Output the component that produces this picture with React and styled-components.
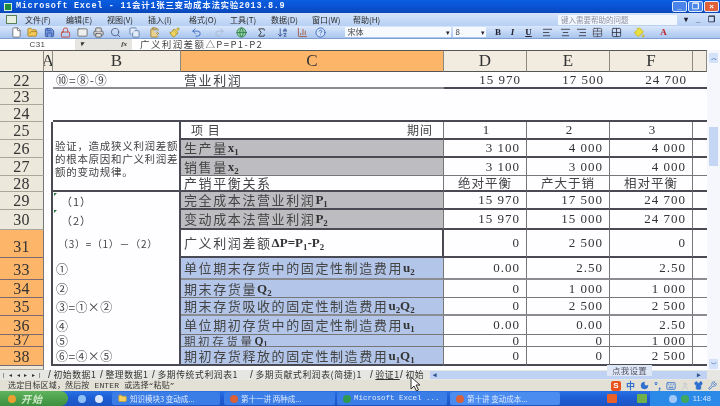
import React from "react";
import styled, { createGlobalStyle } from "styled-components";
import { File, FolderOpen, Save, Printer, Search, Copy, ClipboardPaste, Paintbrush, Undo2, Redo2, Globe, Sigma, ArrowDownAZ, ChartColumn, CircleHelp, Lock, Mail, AlignLeft, AlignCenter, AlignRight, TableCellsMerge, Grid2x2, PaintBucket, Moon, Keyboard, Shirt, Wrench, Folder, User } from "lucide-react";

const CJK = `"Noto Sans CJK SC", "Liberation Sans", sans-serif`;
const SERIF = `"Liberation Serif", "Noto Sans CJK SC", serif`;
const MONO = `"Liberation Mono", "Noto Sans CJK SC", monospace`;

const Global = createGlobalStyle`
  html, body { margin: 0; padding: 0; background: #fff; }
  #root { width: 720px; height: 406px; overflow: hidden; }
  sub { font-size: 0.68em; line-height: 0; vertical-align: -0.3em; }
`;

const Screen = styled.div`
  position: relative; width: 720px; height: 406px; overflow: hidden;
  display: flex; flex-direction: column; filter: blur(0.55px); background: #fff;
`;
const TitleBar = styled.div`
  height: 13px; flex: none; display: flex; align-items: center; padding-left: 4px; gap: 4px;
  background: linear-gradient(#0a5fe0, #0850d0 60%, #0a48b8);
  color: #f2f6ff; font: bold 8.5px/13px ${MONO}; letter-spacing: 0.7px; white-space: nowrap;
`;
const AppGlyph = styled.span`
  width: 8px; height: 8px; background: #1f8a3c; border: 1px solid #d8f0d8; box-sizing: border-box; flex: none;
`;
const WinButtons = styled.div`margin-left: auto; display: flex; gap: 1px; padding-right: 1px; align-items: center; letter-spacing: 0;`;
const WinButton = styled.span`
  width: 15px; height: 11px; border-radius: 2px; border: 1px solid #dfe9ff; box-sizing: border-box;
  background: ${p => (p.$red ? "#e0603a" : "#4a84e8")}; color: #fff; font: bold 8px/9px "Liberation Sans", sans-serif; text-align: center;
`;
const MenuBar = styled.div`
  height: 13px; flex: none; display: flex; align-items: center; padding-left: 6px;
  background: linear-gradient(#d3e3fa, #b7d0f4); font: 8px/13px ${CJK}; color: #2a2a2a; white-space: nowrap;
`;
const MenuHandle = styled.span`
  width: 11px; height: 9px; margin-right: 8px; background: #e4efe0; border: 1px solid #58805a; box-sizing: border-box; flex: none;
`;
const MenuItem = styled.span`width: 41px; flex: none;`;
const HelpBox = styled.span`
  margin-left: 164px; width: 116px; height: 10px; background: #f2f6fd; color: #8b93a3; padding-left: 3px;
  font-size: 7.5px; line-height: 10px; flex: none;
`;
const MenuControls = styled.span`
  display: flex; gap: 8px; margin-left: 7px; font: bold 8px/13px "Liberation Sans", sans-serif; color: #223;
`;
const ToolBar = styled.div`
  height: 13px; flex: none; display: flex; align-items: center; padding-left: 8px;
  background: linear-gradient(#d9e7fb, #a9c5ee); border-bottom: 1px solid #7f9fd0; box-sizing: border-box;
`;
const Tool = styled.span`
  width: ${p => p.$w || 16.5}px; margin-left: ${p => p.$ml || 0}px; flex: none; display: flex; justify-content: center; align-items: center;
  color: ${p => p.$c || "#46679c"}; font: bold 9px/12px ${SERIF};
`;
const Combo = styled.span`
  width: ${p => p.$w}px; height: 10px; flex: none; margin-left: ${p => p.$ml || 0}px; background: #f6f9fe;
  font: 8px/10px ${CJK}; color: #444; padding-left: 3px; box-sizing: border-box; position: relative;
  &::after { content: "▾"; position: absolute; right: 1px; top: 0; font-size: 7px; color: #223; }
`;
const FormulaBar = styled.div`
  height: 11px; flex: none; display: flex; background: #fff; font: 9.5px/11px ${CJK}; color: #444;
`;
const NameBox = styled.span`width: 75px; text-align: center; font: 8px/11px "Liberation Sans", sans-serif; letter-spacing: .4px;`;
const NameArrow = styled.span`width: 57px; background: #e6e5e0; display: flex; box-sizing: border-box; padding: 0 5px 0 5px; justify-content: space-between; font: italic bold 7px/11px ${SERIF}; color: #333;`;
const Formula = styled.span`padding-left: 8px; letter-spacing: 1.4px; white-space: nowrap;`;

const SheetArea = styled.div`height: 320px; flex: none; display: flex; overflow: hidden; position: relative;`;
const Grid = styled.div`
  display: grid; width: 707px; flex: none; align-content: start;
  grid-template-columns: 44px 9px 128px 263px 83px 83px 83px 14px;
  grid-template-rows: 22px 17px 16px 17px 18px 18px 18px 16px 18px 20px 28px 22px 18px 18px 19px 12px 19px 4px;
`;
const ColHead = styled.div`
  background: ${p => (p.$on ? "#fdb56a" : "#f1ebe0")}; border-right: 1px solid #8a8a80; border-bottom: 1px solid #555; border-top: 1px solid #555;
  display: flex; align-items: center; justify-content: center; font: 17px/20px ${SERIF}; color: #333; box-sizing: border-box; overflow: hidden;
`;
const RowHead = styled.div`
  background: ${p => (p.$on ? "#fdb56a" : "#ece8dc")}; border-bottom: 1px solid ${p => (p.$on ? "#7a6a70" : "#aaa79a")};
  border-right: 1px solid #777; box-sizing: border-box; text-align: center; overflow: hidden;
  font: 16px/${p => p.$lh}px ${SERIF}; color: #333; letter-spacing: .3px;
`;
const Cell = styled.div`
  box-sizing: border-box; min-width: 0; overflow: hidden; white-space: nowrap; display: flex; align-items: center;
  background: ${p => p.$bg || "#fefdff"}; color: ${p => (p.$num ? "#333" : "#444")};
  justify-content: ${p => p.$j || "flex-start"};
  padding: 0 ${p => (p.$j === "flex-end" ? 6 : p.$pr ?? 1)}px 0 ${p => p.$pl ?? 3}px;
  font: ${p => p.$fs || 13}px/${p => (p.$tight ? 10 : 14)}px ${p => (p.$num ? SERIF : CJK)};
  letter-spacing: ${p => p.$ls ?? 1.6}px;
  border-bottom: ${p => p.$bb || "none"};
  border-right: ${p => p.$br || "none"};
  grid-row: ${p => p.$span ? `span ${p.$span}` : "auto"};
  grid-column: ${p => p.$col || "auto"};
`;
const NoteCell = styled(Cell)`
  white-space: normal; font-size: 10.5px; line-height: 13px; letter-spacing: .7px; padding: 17px 0 0 2px; align-items: flex-start;
`;
const Marker = styled.span`
  position: absolute; left: 54px; width: 0; height: 0; border-top: 3px solid #1f7a3a; border-right: 3px solid transparent;
`;
const Bold = styled.b`font-family: ${SERIF}; letter-spacing: 0; color: #333;`;
const VBar = styled.div`
  width: 13px; background: #f5f7fc; display: flex; flex-direction: column; align-items: center; padding-top: 3px; box-sizing: border-box;
`;
const Thumb = styled.div`width: 9px; height: 39px; margin-top: 64px; background: #c5d6f4; flex: none;`;
const ScrollBtn = styled.div`
  width: 9px; height: 10px; background: #d4e2f9; color: #4a6fb8; font: bold 6px/10px "Liberation Sans", sans-serif; text-align: center;
  margin-top: ${p => p.$auto ? "auto" : "0"}; margin-bottom: ${p => p.$auto ? "1px" : "0"}; border-radius: 1px; flex: none;
`;
const TabsBar = styled.div`
  height: 10px; flex: none; display: flex; align-items: center; background: #e6e6e2; font: 8.8px/10px ${CJK}; color: #333; white-space: nowrap;
`;
const TabNav = styled.span`width: 48px; flex: none; font: 6px/10px "Liberation Sans", sans-serif; padding-left: 3px; letter-spacing: 4.5px; box-sizing: border-box; color: #333; overflow: hidden;`;
const Tab = styled.span`
  flex: none; letter-spacing: .6px; box-sizing: border-box; width: ${p => p.$w}px; overflow: hidden;
  & > u { text-decoration: ${p => (p.$on ? "underline" : "none")}; }
  &::before { content: "/"; font-size: 10px; margin-right: 2px; font-family: "Liberation Sans", sans-serif; }
`;
const HBar = styled.div`
  width: 277px; margin-left: 2px; height: 8px; background: #bfd2f3; display: flex; justify-content: space-between;
  align-items: center; color: #32518f; font: bold 7px/8px "Liberation Sans", sans-serif; padding: 0 6px 0 3px; box-sizing: border-box; flex: none;
`;
const StatusBar = styled.div`
  height: 11px; flex: none; display: flex; align-items: center; background: #e3e1d6; padding-left: 8px; font: 8px/11px ${MONO}; letter-spacing: .15px; color: #333; white-space: nowrap;
`;
const Ime = styled.div`
  margin-left: auto; display: flex; align-items: center; gap: 5px; height: 11px; padding-right: 3px; color: #2e6fd0; font: bold 9px/11px ${CJK};
`;
const ImeLogo = styled.span`
  width: 10px; height: 10px; border-radius: 2px; background: #e8521c; color: #fff; font: bold 8px/10px "Liberation Sans", sans-serif; text-align: center;
`;
const Taskbar = styled.div`
  height: 15px; flex: none; display: flex; align-items: center; background: linear-gradient(#2a72e6, #1f5fd6 40%, #1c54c2);
  font: 7.5px/13px ${CJK}; color: #dce8ff; white-space: nowrap;
`;
const Start = styled.div`
  width: 68px; height: 100%; flex: none; background: linear-gradient(#5fb45e, #3c8f3e); border-radius: 0 8px 8px 0; box-sizing: border-box;
  display: flex; align-items: center; gap: 5px; padding-left: 8px; font: italic bold 10px/15px ${CJK}; color: #cfe8c8; letter-spacing: 1px;
`;
const Quick = styled.span`width: 44px; flex: none; display: flex; gap: 9px; padding-left: 10px; box-sizing: border-box;`;
const Task = styled.span`
  width: ${p => p.$w}px; margin-right: ${p => p.$mr ?? 3}px; height: 13px; flex: none; border-radius: 2px; display: flex; align-items: center; gap: 3px; padding-left: 6px; box-sizing: border-box; overflow: hidden;
  background: ${p => (p.$on ? "#4a8cf0" : "#3a7de6")}; font-family: ${p => (p.$mono ? MONO : CJK)};
`;
const TrayDot = styled.span`width: 8px; height: 8px; border-radius: 50%; background: ${p => p.$c}; flex: none;`;
const AppTray = styled.span`display: flex; gap: 20px; margin-left: 47px; flex: none; align-items: center;`;
const AppSquare = styled.span`width: 10px; height: 9px; border-radius: 1px; background: ${p => p.$c}; flex: none;`;
const Tray = styled.span`
  margin-left: auto; width: 70px; height: 100%; display: flex; align-items: center; justify-content: flex-end; gap: 4px; padding-right: 9px; box-sizing: border-box; font: 7.5px/15px "Liberation Sans", sans-serif;
  color: #d8e6ff; background: #2b8ae8; flex: none;
`;
const Tip = styled.div`
  position: absolute; left: 607px; top: 365px; width: 45px; height: 11px; background: #dde7f6; color: #556; font: 8.5px/11px ${CJK}; text-align: center; letter-spacing: .3px;
`;
const CursorSvg = styled.svg`position: absolute; left: 410px; top: 376px;`;

const ln = "1px solid #777";
const thick = "2px solid #4a4a55";
const gr = "2px solid #8b8b92";
const gray = "#bdbcc0";
const blue = "#b3c6e9";

const V = ({ children, bb = thick, bg, j = "flex-end", br = ln }) => (
  <Cell $num $j={j} $bb={bb} $br={br} $bg={bg} $ls={j === "center" ? 0 : 1}>{children}</Cell>
);
const End = ({ bb }) => <Cell $bb={bb} />;

const rowsData = [
  { n: 22, lh: 17 }, { n: 23, lh: 16 }, { n: 24, lh: 17 }, { n: 25, lh: 18 }, { n: 26, lh: 18 }, { n: 27, lh: 18 }, { n: 28, lh: 16 },
  { n: 29, lh: 18 }, { n: 30, lh: 20 }, { n: 31, lh: 34, on: 1 }, { n: 33, lh: 24, on: 1 }, { n: 34, lh: 18, on: 1 }, { n: 35, lh: 18, on: 1 },
  { n: 36, lh: 19, on: 1 }, { n: 37, lh: 10, on: 1 }, { n: 38, lh: 19, on: 1 }, { n: 39, lh: 20 },
];
const Head = ({ i }) => <RowHead $on={rowsData[i].on} $lh={rowsData[i].lh}>{rowsData[i].n}</RowHead>;
const A = () => <Cell $br={thick} $pl={0} />;

const Circ = ({ children, bb }) => <Cell $br={thick} $bb={bb} $fs={12} $ls={.4}>{children}</Cell>;
const Paren = ({ children }) => <Cell $br={thick} $fs={11} $pl={8} $ls={1}>{children}</Cell>;

function Sheet() {
  return (
    <Grid>
      <ColHead />
      <ColHead>A</ColHead>
      <ColHead>B</ColHead>
      <ColHead $on>C</ColHead>
      <ColHead>D</ColHead>
      <ColHead>E</ColHead>
      <ColHead>F</ColHead>
      <ColHead />

      <Head i={0} /><Cell /><Cell $bb={gr} $fs={12} $ls={1}>⑩=⑧-⑨</Cell><Cell $bb={gr}>营业利润</Cell>
      <V bb={thick} br="none">15 970</V><V bb={thick} br="none">17 500</V><V bb={thick} br="none">24 700</V><Cell $bb={thick} />

      <Head i={1} /><Cell $col="2 / 9" />
      <Head i={2} /><Cell /><Cell $col="3 / 9" $bb={thick} />

      <Head i={3} /><A />
      <NoteCell $span={4} $br={thick} $bb={thick}>验证，造成狭义利润差额的根本原因和广义利润差额的变动规律。</NoteCell>
      <Cell $j="space-between" $fs={12} $bb={thick} $br={ln} $ls={1} $pl={10} $pr={10}><span>项 目</span><span>期间</span></Cell>
      <V j="center">1</V><V j="center">2</V><V j="center">3</V><End bb={thick} />

      <Head i={4} /><A />
      <Cell $bg={gray} $bb={thick} $br={ln}>生产量<Bold>x<sub>1</sub></Bold></Cell>
      <V>3 100</V><V>4 000</V><V>4 000</V><End bb={thick} />

      <Head i={5} /><A />
      <Cell $bg={gray} $bb={ln} $br={ln}>销售量<Bold>x<sub>2</sub></Bold></Cell>
      <V bb={ln}>3 100</V><V bb={ln}>3 000</V><V bb={ln}>4 000</V><End bb={ln} />

      <Head i={6} /><A />
      <Cell $bb={thick} $br={ln}>产销平衡关系</Cell>
      <Cell $j="center" $bb={thick} $br={ln} $fs={12.5} $ls={1} $pl={1}>绝对平衡</Cell>
      <Cell $j="center" $bb={thick} $br={ln} $fs={12.5} $ls={1} $pl={1}>产大于销</Cell>
      <Cell $j="center" $bb={thick} $br={ln} $fs={12.5} $ls={1} $pl={1}>相对平衡</Cell><End bb={thick} />

      <Head i={7} /><A />
      <Paren>（1）</Paren>
      <Cell $bg={gray} $bb={thick} $br={ln}>完全成本法营业利润<Bold>P<sub>1</sub></Bold></Cell>
      <V>15 970</V><V>17 500</V><V>24 700</V><End bb={thick} />

      <Head i={8} /><A />
      <Paren>（2）</Paren>
      <Cell $bg={gray} $bb={thick} $br={ln}>变动成本法营业利润<Bold>P<sub>2</sub></Bold></Cell>
      <V>15 970</V><V>15 000</V><V>24 700</V><End bb={thick} />

      <Head i={9} /><A />
      <Cell $br={thick} $fs={10} $pl={5} $ls={.7}>（3）=（1）－（2）</Cell>
      <Cell $bb={thick} $br={thick}>广义利润差额<Bold>ΔP=P<sub>1</sub>-P<sub>2</sub></Bold></Cell>
      <V>0</V><V>2 500</V><V>0</V><End bb={thick} />

      <Head i={10} /><A />
      <Circ>①</Circ>
      <Cell $bg={blue} $bb={gr} $br={ln}>单位期末存货中的固定性制造费用<Bold>u<sub>2</sub></Bold></Cell>
      <V bb={gr}>0.00</V><V bb={gr}>2.50</V><V bb={gr}>2.50</V><End bb={gr} />

      <Head i={11} /><A />
      <Circ>②</Circ>
      <Cell $bg={blue} $bb={ln} $br={ln}>期末存货量<Bold>Q<sub>2</sub></Bold></Cell>
      <V bb={ln}>0</V><V bb={ln}>1 000</V><V bb={ln}>1 000</V><End bb={ln} />

      <Head i={12} /><A />
      <Circ>③=①×②</Circ>
      <Cell $bg={blue} $bb={gr} $br={ln}>期末存货吸收的固定性制造费用<Bold>u<sub>2</sub>Q<sub>2</sub></Bold></Cell>
      <V bb={gr}>0</V><V bb={gr}>2 500</V><V bb={gr}>2 500</V><End bb={gr} />

      <Head i={13} /><A />
      <Circ>④</Circ>
      <Cell $bg={blue} $bb={ln} $br={ln}>单位期初存货中的固定性制造费用<Bold>u<sub>1</sub></Bold></Cell>
      <V bb={ln}>0.00</V><V bb={ln}>0.00</V><V bb={ln}>2.50</V><End bb={ln} />

      <Head i={14} /><A />
      <Circ>⑤</Circ>
      <Cell $bg={blue} $bb={ln} $br={ln} $fs={11.5} $ls={2.6} $tight>期初存货量<Bold>Q<sub>1</sub></Bold></Cell>
      <V bb={ln}>0</V><V bb={ln}>0</V><V bb={ln}>1 000</V><End bb={ln} />

      <Head i={15} /><A />
      <Circ bb={thick}>⑥=④×⑤</Circ>
      <Cell $bg={blue} $bb={thick} $br={ln}>期初存货释放的固定性制造费用<Bold>u<sub>1</sub>Q<sub>1</sub></Bold></Cell>
      <V>0</V><V>0</V><V>2 500</V><End bb={thick} />

      <Head i={16} /><Cell $col="2 / 9" />
    </Grid>
  );
}

const I = { size: 11, strokeWidth: 1.8 };
const menus = ["文件(F)", "编辑(E)", "视图(V)", "插入(I)", "格式(O)", "工具(T)", "数据(D)", "窗口(W)", "帮助(H)"];

export default function App() {
  return (
    <Screen>
      <Global />
      <TitleBar>
        <AppGlyph />
        <span>Microsoft Excel - 11会计1张三变动成本法实验2013.8.9</span>
        <WinButtons>
          <WinButton>_</WinButton><WinButton>❐</WinButton><WinButton $red>×</WinButton>
        </WinButtons>
      </TitleBar>
      <MenuBar>
        <MenuHandle />
        {menus.map(m => <MenuItem key={m}>{m}</MenuItem>)}
        <HelpBox>键入需要帮助的问题</HelpBox>
        <MenuControls><span>▾</span><span>_</span><span>❐</span><span>×</span></MenuControls>
      </MenuBar>
      <ToolBar>
        <Tool $c="#fff"><File {...I} color="#666" fill="#fff" /></Tool>
        <Tool><FolderOpen {...I} color="#a57c20" fill="#f3c95a" /></Tool>
        <Tool><Save {...I} color="#2e4f9c" fill="#7a9ae0" /></Tool>
        <Tool><Lock {...I} color="#c23a2a" /></Tool>
        <Tool><Mail {...I} color="#666" fill="#eee" /></Tool>
        <Tool><Printer {...I} color="#555" fill="#ddd" /></Tool>
        <Tool><Search {...I} color="#4a5a80" /></Tool>
        <Tool $w={22}><Copy {...I} color="#5573a8" fill="#e3ecf9" /></Tool>
        <Tool $w={18}><ClipboardPaste {...I} color="#9a7a2a" fill="#e9d190" /></Tool>
        <Tool $w={22}><Paintbrush {...I} color="#a58a20" fill="#f0d860" /></Tool>
        <Tool $w={22}><Undo2 {...I} color="#2f5fb8" /></Tool>
        <Tool $w={24}><Redo2 {...I} color="#a8b4cc" /></Tool>
        <Tool $w={20}><Globe {...I} color="#2f7a4a" fill="#8fd0a0" /></Tool>
        <Tool $w={20}><Sigma {...I} color="#222" /></Tool>
        <Tool $w={22}><ArrowDownAZ {...I} color="#2f4f8c" /></Tool>
        <Tool $w={18}><ChartColumn {...I} color="#a04a2a" /></Tool>
        <Tool $w={18}><CircleHelp {...I} color="#2f5fb8" fill="#cfe0fa" /></Tool>
        <Combo $w={106} $ml={15}>宋体</Combo>
        <Combo $w={33} $ml={2}>8</Combo>
        <Tool $w={13} $ml={6} $c="#223">B</Tool>
        <Tool $w={16} $c="#223"><i>I</i></Tool>
        <Tool $w={16} $c="#223"><u>U</u></Tool>
        <Tool $w={21}><AlignLeft {...I} color="#334" /></Tool>
        <Tool $w={16}><AlignCenter {...I} color="#334" /></Tool>
        <Tool $w={15}><AlignRight {...I} color="#334" /></Tool>
        <Tool $w={17}><TableCellsMerge {...I} color="#556" /></Tool>
        <Tool $w={22}><Grid2x2 {...I} color="#334" /></Tool>
        <Tool $w={24}><PaintBucket {...I} color="#c8b020" fill="#e8e040" /></Tool>
        <Tool $w={24} $c="#c02020">A</Tool>
      </ToolBar>
      <FormulaBar>
        <NameBox>C31</NameBox>
        <NameArrow><span>▾</span><span>fx</span></NameArrow>
        <Formula>广义利润差额△P=P1-P2</Formula>
      </FormulaBar>
      <SheetArea>
        <Sheet />
        <VBar>
          <ScrollBtn>︿</ScrollBtn>
          <Thumb />
          <ScrollBtn $auto>﹀</ScrollBtn>
        </VBar>
      </SheetArea>
      <TabsBar>
        <TabNav>|◂◂▸▸|</TabNav>
        <Tab $w={52}>初始数据1</Tab>
        <Tab $w={52}>整理数据1</Tab>
        <Tab $w={98}>多期传统式利润表1</Tab>
        <Tab $w={120}>多期贡献式利润表(简捷)1</Tab>
        <Tab $w={30} $on><u>验证1</u></Tab>
        <Tab $w={28}>初始</Tab>
        <HBar><span>◂</span><span>▸</span></HBar>
      </TabsBar>
      <StatusBar>
        <span>选定目标区域，然后按 ENTER 或选择“粘贴”</span>
        <Ime>
          <ImeLogo>S</ImeLogo><span>中</span><Moon size={9} fill="#2e6fd0" /><span>°,</span><Keyboard size={10} /><User size={8} color="#b8c0cc" /><Shirt size={9} fill="#2e6fd0" /><Wrench size={9} />
        </Ime>
      </StatusBar>
      <Taskbar>
        <Start><TrayDot $c="#e8a030" />开始</Start>
        <Quick><TrayDot $c="#8fc0f5" /><TrayDot $c="#dce8ff" /></Quick>
        <Task $w={108} $mr={4}><Folder size={9} color="#c8a030" fill="#f0d060" />知识模块3 变动成...</Task>
        <Task $w={111} $mr={2}><TrayDot $c="#d8603a" />第十一讲 两种成...</Task>
        <Task $w={110} $mono><TrayDot $c="#2e9a50" />Microsoft Excel ...</Task>
        <Task $w={110} $mr={0} $on><TrayDot $c="#d8603a" />第十讲 变动成本...</Task>
        <AppTray><AppSquare $c="#e8602a" /><AppSquare $c="#6fb04a" /></AppTray>
        <Tray><TrayDot $c="#9fc8f8" /><TrayDot $c="#3fa860" /><span>11:48</span></Tray>
      </Taskbar>
      <Marker style={{ top: 193 }} />
      <Marker style={{ top: 210 }} />
      <Tip>点我设置</Tip>
      <CursorSvg width="12" height="16" viewBox="0 0 12 16">
        <path d="M1 1 L1 13 L4 10 L6.5 15 L8.5 14 L6 9 L10 9 Z" fill="#fff" stroke="#333" strokeWidth="1" />
      </CursorSvg>
    </Screen>
  );
}
